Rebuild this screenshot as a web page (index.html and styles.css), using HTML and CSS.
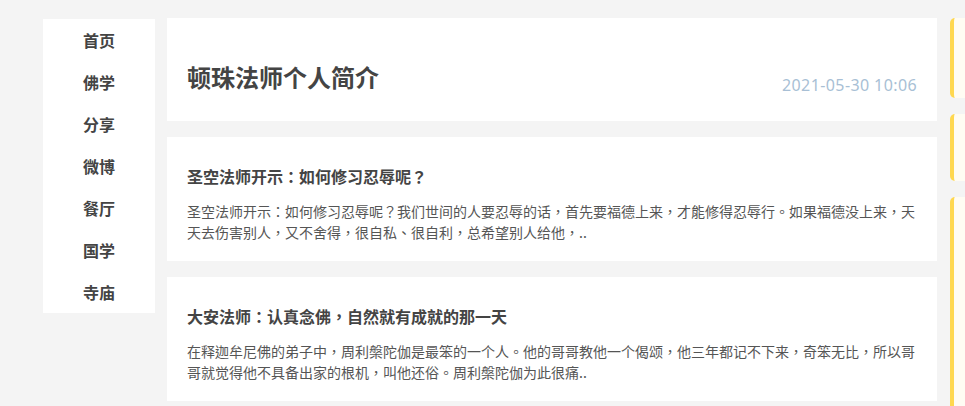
FILE: index.html
```html
<!DOCTYPE html>
<html lang="zh-CN">
<head>
<meta charset="utf-8">
<title>顿珠法师个人简介</title>
<link rel="stylesheet" href="styles.css">
</head>
<body>
<div class="page">
  <nav class="sidenav">
    <a href="#">首页</a>
    <a href="#">佛学</a>
    <a href="#">分享</a>
    <a href="#">微博</a>
    <a href="#">餐厅</a>
    <a href="#">国学</a>
    <a href="#">寺庙</a>
  </nav>
  <main class="main">
    <section class="card head-card">
      <h1 class="page-title">顿珠法师个人简介</h1>
      <span class="date">2021-05-30 10:06</span>
    </section>
    <article class="card post" lang="zh-Hant">
      <h2 class="post-title">圣空法师开示：如何修习忍辱呢？</h2>
      <p class="post-text">圣空法师开示：如何修习忍辱呢？我们世间的人要忍辱的话，首先要福德上来，才能修得忍辱行。如果福德没上来，天天去伤害别人，又不舍得，很自私、很自利，总希望别人给他，..</p>
    </article>
    <article class="card post" lang="zh-Hant">
      <h2 class="post-title">大安法师：认真念佛，自然就有成就的那一天</h2>
      <p class="post-text">在释迦牟尼佛的弟子中，周利槃陀伽是最笨的一个人。他的哥哥教他一个偈颂，他三年都记不下来，奇笨无比，所以哥哥就觉得他不具备出家的根机，叫他还俗。周利槃陀伽为此很痛..</p>
    </article>
  </main>
  <aside class="side">
    <div class="side-box box-a"></div>
    <div class="side-box box-b"></div>
    <div class="side-box box-c"></div>
  </aside>
</div>
</body>
</html>
```

FILE: styles.css
```css
html, body {
  margin: 0;
  padding: 0;
  background: #f4f4f4;
  overflow: hidden;
}
body {
  font-family: "Noto Sans CJK SC", "Noto Sans", sans-serif;
  color: #444;
}
.page {
  display: flex;
  align-items: flex-start;
  padding: 18px 0 0 43px;
  width: 1300px;
}
.sidenav {
  width: 112px;
  flex-shrink: 0;
  margin-top: 1px;
  background: #fff;
  display: flex;
  flex-direction: column;
}
.sidenav a {
  display: block;
  text-align: center;
  line-height: 42px;
  height: 42px;
  font-size: 16px;
  font-weight: 600;
  color: #444;
  text-decoration: none;
}
.main {
  width: 770px;
  flex-shrink: 0;
  margin-left: 12px;
  display: flex;
  flex-direction: column;
  gap: 16px;
}
.card {
  background: #fff;
  box-sizing: border-box;
}
.head-card {
  height: 103px;
  padding: 41px 20px 26px;
  display: flex;
  justify-content: space-between;
  align-items: flex-end;
}
.page-title {
  margin: 0;
  font-size: 24px;
  line-height: 36px;
  font-weight: 700;
  color: #444;
}
.date {
  font-family: "Noto Sans", "Open Sans", sans-serif;
  font-size: 16px;
  line-height: 20px;
  letter-spacing: 0.4px;
  color: #a8bfd5;
}
.post {
  height: 124px;
  padding: 27px 20px 0;
}
.post-title,
.post-text {
  font-family: "Noto Sans CJK TC", "Noto Sans CJK SC", sans-serif;
}
.post-title {
  margin: 0;
  font-size: 16px;
  line-height: 24px;
  font-weight: 700;
  color: #444;
}
.post-text {
  margin: 13px 0 0;
  font-size: 14px;
  line-height: 21px;
  color: #555;
}
.side {
  margin-left: 13px;
  width: 300px;
  flex-shrink: 0;
  display: flex;
  flex-direction: column;
  gap: 16px;
}
.side-box {
  background: #fffcf3;
  border-left: 4px solid #ffd84f;
  border-radius: 5px;
}
.box-a { height: 80px; }
.box-b { height: 67px; }
.box-c { height: 300px; }
```
